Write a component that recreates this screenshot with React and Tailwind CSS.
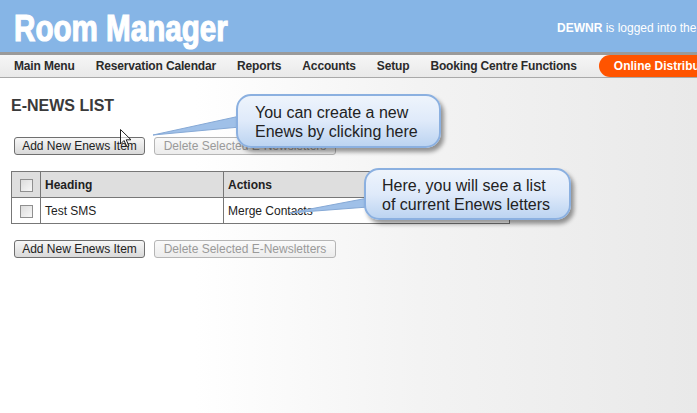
import React from 'react'

const navItems = ['Main Menu', 'Reservation Calendar', 'Reports', 'Accounts', 'Setup', 'Booking Centre Functions']

const Checkbox = () => (
	<span className="inline-block w-[13px] h-[13px] border border-[#8f8f8f] bg-gradient-to-br from-[#dcdcdc] to-[#f7f7f7] align-middle"></span>
)

const ButtonRow = () => (
	<div className="flex items-center gap-[9px] pl-[3px]">
		<button className="w-[131px] h-[18px] text-[12px] leading-[16px] text-[#222] border border-[#6f6f6f] rounded-[3px] bg-gradient-to-b from-[#f7f7f7] to-[#d9d9d9]">Add New Enews Item</button>
		<button className="w-[182px] h-[18px] text-[12px] leading-[16px] text-[#9a9a9a] border border-[#b5b5b5] rounded-[3px] bg-gradient-to-b from-[#fafafa] to-[#ececec]">Delete Selected E-Newsletters</button>
	</div>
)

const Callout = ({ className, lines }) => (
	<div className={`absolute rounded-[15px] border-2 border-[#8bb0e0] bg-gradient-to-b from-[#eef4fc] via-[#dfeafa] to-[#bcd4f1] shadow-[3px_4px_4px_rgba(0,0,0,0.4)] text-[16px] leading-[19px] text-[#222] ${className}`}>
		{lines.map((l) => <div key={l}>{l}</div>)}
	</div>
)

const App = () => {
	return (
		<div className="relative w-[697px] h-[413px] overflow-hidden font-['Liberation_Sans',Arial,sans-serif] bg-[linear-gradient(to_right,#ffffff_28%,#f3f3f3_60%,#e9e9e9_100%)]">
			{/* header */}
			<div className="h-[52px] bg-[#86b5e6] flex items-center justify-between">
				<div className="ml-[14px] mt-[6px] origin-left scale-x-[0.8]">
					<div className="text-white text-[37px] leading-[40px] font-bold [-webkit-text-stroke:1.2px_white] whitespace-nowrap">Room Manager</div>
				</div>
				<div className="text-white text-[12px] whitespace-nowrap w-[140px] mt-[4px]">
					<span className="font-bold">DEWNR</span> is logged into the system
				</div>
			</div>
			<div className="h-[3px] bg-[#9a9a9a]"></div>

			{/* nav */}
			<div className="h-[23px] flex items-center bg-gradient-to-b from-[#f6f6f6] to-[#e9e9e9] border-b border-[#a9a9a9]">
				<div className="flex items-center gap-[21px] pl-[14px] text-[12px] font-bold text-[#2b2b2b] tracking-[-0.15px]">
					{navItems.map((item) => (
						<span key={item} className="whitespace-nowrap">{item}</span>
					))}
				</div>
				<div className="ml-[22px] h-[22px] flex items-center pl-[15px] pr-[20px] rounded-l-full bg-[#ff5400] text-white text-[12px] font-bold whitespace-nowrap">Online Distribution</div>
			</div>

			{/* content */}
			<div className="pl-[11px] pt-[18px]">
				<h1 className="text-[16px] leading-[20px] font-bold text-[#3a3a3a]">E-NEWS LIST</h1>
				<div className="mt-[21px]">
					<ButtonRow />
				</div>
				<table className="mt-[16px] w-[499px] border-collapse text-[12px] text-[#222]">
					<thead>
						<tr className="h-[26px] bg-[#dedede]">
							<th className="w-[29px] border border-[#777] text-center"><Checkbox /></th>
							<th className="w-[183px] border border-[#777] text-left pl-[4px] font-bold">Heading</th>
							<th className="border border-[#777] text-left pl-[4px] font-bold">Actions</th>
						</tr>
					</thead>
					<tbody>
						<tr className="h-[26px] bg-white">
							<td className="border border-[#777] text-center"><Checkbox /></td>
							<td className="border border-[#777] pl-[4px]">Test SMS</td>
							<td className="border border-[#777] pl-[4px]">Merge Contacts</td>
						</tr>
					</tbody>
				</table>
				<div className="mt-[16px]">
					<ButtonRow />
				</div>
			</div>

			{/* callout tails */}
			<svg className="absolute left-0 top-0 pointer-events-none" width="697" height="413">
				<polygon points="153,135 240,116 240,127" fill="#9fc0e8" stroke="#86a9d6" strokeWidth="1" />
				<polygon points="289,213 368,198 368,207" fill="#9fc0e8" stroke="#86a9d6" strokeWidth="1" />
			</svg>

			<Callout className="left-[236px] top-[94px] w-[205px] h-[54px] pl-[17px] pt-[7px]" lines={['You can create a new', 'Enews by clicking here']} />
			<Callout className="left-[364px] top-[168px] w-[207px] h-[52px] pl-[16px] pt-[6px]" lines={['Here, you will see a list', 'of current Enews letters']} />

			{/* mouse pointer */}
			<svg className="absolute left-[120px] top-[129px]" width="14" height="20" viewBox="0 0 14 20">
				<path d="M0.5 0.5 L0.5 15 L4 11.5 L7 18 L9 17 L6.2 10.8 L11 10.8 Z" fill="white" fillOpacity="0.6" stroke="#222" strokeWidth="1" />
			</svg>
		</div>
	)
}

export default App
